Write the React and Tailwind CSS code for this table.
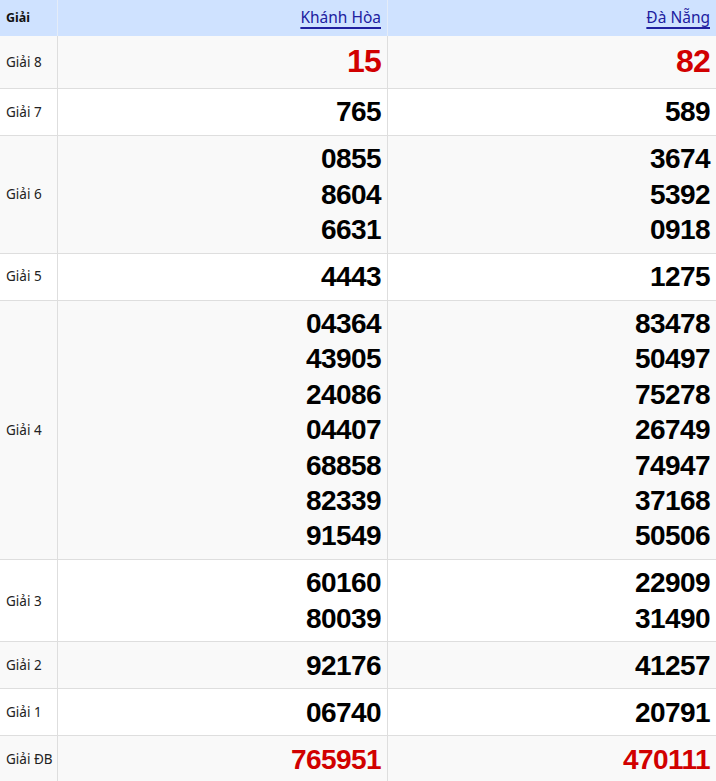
import React from "react";

const rows = [
  { label: "Giải 8", a: ["15"], b: ["82"], big: true, red: true },
  { label: "Giải 7", a: ["765"], b: ["589"] },
  { label: "Giải 6", a: ["0855", "8604", "6631"], b: ["3674", "5392", "0918"] },
  { label: "Giải 5", a: ["4443"], b: ["1275"] },
  {
    label: "Giải 4",
    a: ["04364", "43905", "24086", "04407", "68858", "82339", "91549"],
    b: ["83478", "50497", "75278", "26749", "74947", "37168", "50506"],
  },
  { label: "Giải 3", a: ["60160", "80039"], b: ["22909", "31490"] },
  { label: "Giải 2", a: ["92176"], b: ["41257"] },
  { label: "Giải 1", a: ["06740"], b: ["20791"] },
  { label: "Giải ĐB", a: ["765951"], b: ["470111"], red: true },
];

function NumCell({ nums, big, red, last, bg }) {
  return (
    <div
      className={`${bg} ${last ? "" : "border-r"} border-b border-[#dedede] py-[5.3px] pr-[6px] text-right font-bold ${
        big ? "text-[32px] leading-[41.2px]" : "text-[28px] leading-[35.4px]"
      } ${red ? "text-[#d10000]" : "text-black"} ${big ? "tracking-[-0.8px]" : "tracking-[-0.57px]"}`}
      style={{ fontFamily: '"Liberation Sans", Arial, sans-serif' }}
    >
      {nums.map((n, i) => (
        <div key={i}>{n}</div>
      ))}
    </div>
  );
}

export default function App() {
  return (
    <div className="w-[716px] bg-white" style={{ fontFamily: '"Noto Sans", sans-serif' }}>
      <div className="grid grid-cols-[58px_330px_328px]">
        <div className="bg-[#cfe2ff] h-[36px] flex items-center pl-[6px] border-r border-[#e4ecf8] text-[12.5px] font-bold text-[#111]">
          Giải
        </div>
        <div className="bg-[#cfe2ff] h-[36px] flex items-center justify-end pr-[6px] border-r border-[#e4ecf8]">
          <a href="#" className="text-[15.5px] text-[#2020a0] underline underline-offset-[4px] decoration-[1.5px]">
            Khánh Hòa
          </a>
        </div>
        <div className="bg-[#cfe2ff] h-[36px] flex items-center justify-end pr-[6px]">
          <a href="#" className="text-[15.5px] text-[#2020a0] underline underline-offset-[4px] decoration-[1.5px]">
            Đà Nẵng
          </a>
        </div>
        {rows.map((r, i) => {
          const bg = i % 2 === 0 ? "bg-[#f9f9f9]" : "bg-white";
          return (
            <React.Fragment key={r.label}>
              <div
                className={`${bg} border-r border-b border-[#dedede] flex items-center pl-[6px] text-[13.5px] text-[#222]`}
              >
                {r.label}
              </div>
              <NumCell nums={r.a} big={r.big} red={r.red} bg={bg} />
              <NumCell nums={r.b} big={r.big} red={r.red} bg={bg} last />
            </React.Fragment>
          );
        })}
      </div>
    </div>
  );
}
